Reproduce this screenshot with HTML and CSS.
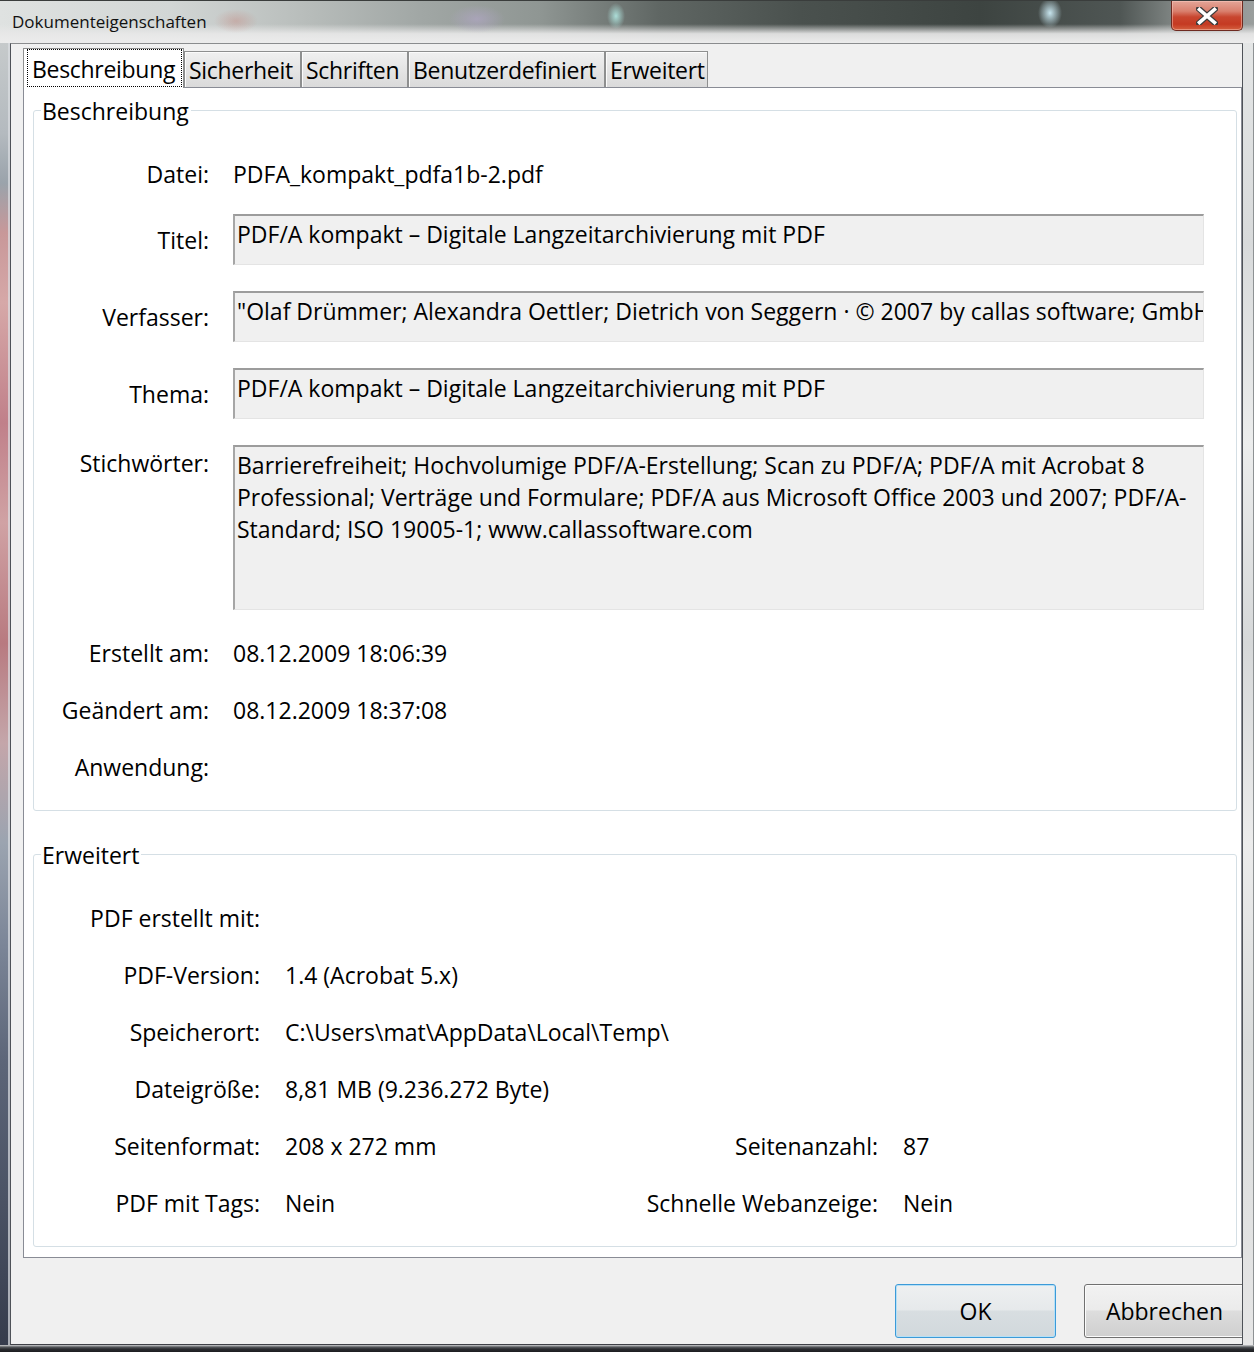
FILE: index.html
```html
<!DOCTYPE html>
<html lang="de">
<head>
<meta charset="utf-8">
<title>Dokumenteigenschaften</title>
<link rel="stylesheet" href="styles.css">
</head>
<body>
<div class="window">
  <div class="titlebar">
    <span class="title">Dokumenteigenschaften</span>
    <div class="close">
      <svg width="22" height="18" viewBox="0 0 22 18">
        <path d="M3 2 L19 16 M19 2 L3 16" stroke="#3c3c3c" stroke-width="6" stroke-linecap="square" fill="none"/>
        <path d="M3.5 2.5 L18.5 15.5 M18.5 2.5 L3.5 15.5" stroke="#ffffff" stroke-width="3.6" stroke-linecap="square" fill="none"/>
      </svg>
    </div>
  </div>
  <div class="frame-row">
    <div class="frame-left"></div>
    <div class="client">
      <div class="tabs">
        <div class="tab tab-active"><span class="tab-focus">Beschreibung</span></div>
        <div class="tab tab-sicherheit">Sicherheit</div>
        <div class="tab tab-schriften">Schriften</div>
        <div class="tab tab-benutzer">Benutzerdefiniert</div>
        <div class="tab tab-erweitert">Erweitert</div>
      </div>
      <div class="panel">
        <fieldset class="group group-desc">
          <legend>Beschreibung</legend>
          <div class="row row-text">
            <div class="label">Datei:</div>
            <div class="value">PDFA_kompakt_pdfa1b-2.pdf</div>
          </div>
          <div class="row gap-13">
            <div class="label">Titel:</div>
            <div class="field">PDF/A kompakt – Digitale Langzeitarchivierung mit PDF</div>
          </div>
          <div class="row gap-26">
            <div class="label">Verfasser:</div>
            <div class="field">"Olaf Drümmer; Alexandra Oettler; Dietrich von Seggern · © 2007 by callas software; GmbH</div>
          </div>
          <div class="row gap-26">
            <div class="label">Thema:</div>
            <div class="field">PDF/A kompakt – Digitale Langzeitarchivierung mit PDF</div>
          </div>
          <div class="row row-tall gap-26">
            <div class="label label-top">Stichwörter:</div>
            <div class="field">Barrierefreiheit; Hochvolumige PDF/A-Erstellung; Scan zu PDF/A; PDF/A mit Acrobat 8<br>Professional; Verträge und Formulare; PDF/A aus Microsoft Office 2003 und 2007; PDF/A-<br>Standard; ISO 19005-1; www.callassoftware.com</div>
          </div>
          <div class="row row-text gap-19">
            <div class="label">Erstellt am:</div>
            <div class="value">08.12.2009 18:06:39</div>
          </div>
          <div class="row row-text gap-6">
            <div class="label">Geändert am:</div>
            <div class="value">08.12.2009 18:37:08</div>
          </div>
          <div class="row row-text gap-6">
            <div class="label">Anwendung:</div>
            <div class="value"></div>
          </div>
        </fieldset>

        <fieldset class="group group-ext">
          <legend>Erweitert</legend>
          <div class="ext-grid">
            <div class="label">PDF erstellt mit:</div>
            <div class="value span-rest"></div>

            <div class="label">PDF-Version:</div>
            <div class="value span-rest">1.4 (Acrobat 5.x)</div>

            <div class="label">Speicherort:</div>
            <div class="value span-rest">C:\Users\mat\AppData\Local\Temp\</div>

            <div class="label">Dateigröße:</div>
            <div class="value span-rest">8,81 MB (9.236.272 Byte)</div>

            <div class="label">Seitenformat:</div>
            <div class="value">208 x 272 mm</div>
            <div class="label">Seitenanzahl:</div>
            <div class="value">87</div>

            <div class="label">PDF mit Tags:</div>
            <div class="value">Nein</div>
            <div class="label">Schnelle Webanzeige:</div>
            <div class="value">Nein</div>
          </div>
        </fieldset>
      </div>
      <div class="buttons">
        <button class="btn btn-default" type="button">OK</button>
        <button class="btn btn-cancel" type="button">Abbrechen</button>
      </div>
    </div>
    <div class="frame-right"></div>
  </div>
  <div class="frame-bottom"></div>
</div>
</body>
</html>
```

FILE: styles.css
```css
* { box-sizing: border-box; }

html, body {
  margin: 0;
  padding: 0;
  background: #1e1e1e;
}

body {
  font-family: "Open Sans", "Noto Sans", sans-serif;
  color: #000;
}

.window {
  width: 1254px;
  height: 1352px;
  display: flex;
  flex-direction: column;
  overflow: hidden;
}

/* ---------- title bar (glass) ---------- */
.titlebar {
  height: 43px;
  flex: none;
  display: flex;
  align-items: flex-start;
  border-top: 1px solid #3a3d3c;
  background:
    radial-gradient(ellipse 12px 15px at 1050px 12px, rgba(205, 236, 246, 0.95), rgba(205, 236, 246, 0) 100%),
    radial-gradient(ellipse 9px 13px at 616px 15px, rgba(178, 232, 226, 0.9), rgba(178, 232, 226, 0) 100%),
    radial-gradient(ellipse 28px 14px at 477px 18px, rgba(176, 166, 196, 0.7), rgba(176, 166, 196, 0) 100%),
    radial-gradient(ellipse 22px 12px at 236px 20px, rgba(196, 120, 110, 0.35), rgba(196, 120, 110, 0) 100%),
    linear-gradient(to bottom, rgba(236, 236, 236, 0) 0, rgba(236, 236, 236, 0) 55%, rgba(232, 232, 232, 0.92) 78%, #ececec 100%),
    linear-gradient(to right, #dfe2e1 0, #d2d6d5 170px, #b9bebc 300px, #a1a7a5 420px, #8f9693 540px, #5f6663 660px, #4a514e 800px, #3d4441 980px, #4f5654 1120px, #7c8280 1170px, #9a9e9d 1254px);
}

.title {
  padding-left: 12px;
  font-size: 17px;
  line-height: 20px;
  margin-top: 11px;
  color: #111;
}

.close {
  margin-left: auto;
  margin-right: 11px;
  width: 72px;
  height: 30px;
  border: 1px solid #6e2a20;
  border-top: none;
  border-radius: 0 0 5px 5px;
  background: linear-gradient(to bottom, #e3a598 0, #d9806e 35%, #c8462f 55%, #c53a22 80%, #d4603f 100%);
  box-shadow: inset 0 0 0 1px rgba(255, 210, 200, 0.45);
  display: flex;
  align-items: center;
  justify-content: center;
}

/* ---------- frame ---------- */
.frame-row {
  height: 1302px;
  flex: none;
  display: flex;
}

.frame-left {
  width: 10px;
  flex: none;
  background: linear-gradient(to bottom, #c6cacb 0, #b4babf 90px, #9aa3ab 140px, #c89899 190px, #d6a8a8 260px, #c0808a 380px, #d0a2a4 480px, #b87a80 600px, #c4a6aa 700px, #9ba4b0 800px, #7c8698 900px, #5c6578 1020px, #4a5264 1160px, #363c4c 1302px);
  box-shadow: inset -2px 0 0 rgba(220, 222, 226, 0.7);
}

.frame-right {
  width: 11px;
  flex: none;
  background: linear-gradient(to bottom, #e4e6e6 0, #d8dadb 200px, #eceded 400px, #d6d8d9 600px, #ececec 800px, #dadcdc 1000px, #e6e6e6 1302px);
  border-right: 1px solid #8e9294;
}

.frame-bottom {
  height: 7px;
  flex: none;
  background: linear-gradient(to bottom, #cfd0d2 0, #55585c 30%, #2a2c30 60%, #1c1d20 100%);
}

/* ---------- client ---------- */
.client {
  width: 1233px;
  flex: none;
  background: #f0f0f0;
  border-top: 1px solid #8a8c8e;
  border-left: 1px solid #4e5258;
  border-right: 1px solid #4e5258;
  border-bottom: 1px solid #3e4046;
  padding: 4px 0 0 12px;
  display: flex;
  flex-direction: column;
  overflow: hidden;
}

/* ---------- tabs ---------- */
.tabs {
  height: 39px;
  display: flex;
  align-items: flex-end;
  flex: none;
}

.tab {
  height: 36px;
  border: 1px solid #8e8f8f;
  border-bottom: none;
  background: linear-gradient(to bottom, #f0f0f0 0, #e6e6e6 45%, #dadada 100%);
  box-shadow: inset 1px 1px 0 #fbfbfb;
  font-size: 23px;
  line-height: 32px;
  letter-spacing: -0.3px;
  padding: 2px 0 0 4px;
  white-space: nowrap;
  overflow: hidden;
}

.tab-active {
  position: relative;
  z-index: 1;
  width: 161px;
  height: 40px;
  margin-bottom: -1px;
  background: #fff;
  box-shadow: none;
  padding: 0 1px 0 3px;
}

.tab-focus {
  display: block;
  height: 38px;
  border: 1px dotted #000;
  padding: 3px 0 0 4px;
  line-height: 32px;
}

.tab-sicherheit { width: 117px; }
.tab-schriften { width: 107px; }
.tab-benutzer { width: 197px; }
.tab-erweitert { width: 103px; }

/* ---------- panel ---------- */
.panel {
  flex: none;
  width: 1219px;
  height: 1171px;
  background: #fff;
  border: 1px solid #898c95;
  padding: 6px 4px 0 9px;
}

.group {
  margin: 0;
  padding: 0;
  min-inline-size: 0;
  border: 1px solid #d5dfe5;
  border-radius: 3px;
  width: 1204px;
}

.group legend {
  font-size: 23px;
  line-height: 32px;
  padding: 0 2px 0 1px;
  margin-left: 7px;
  position: relative;
  top: 1px;
}

.group-desc {
  padding-top: 24px;
  padding-bottom: 16px;
}

.group-ext {
  margin-top: 27px;
  padding-top: 22px;
  padding-bottom: 18px;
}

.row {
  height: 51px;
  display: grid;
  grid-template-columns: 175px 971px;
  column-gap: 24px;
  align-items: center;
}

.row-text { padding-bottom: 3px; }

.row-tall { height: 165px; }

.gap-6 { margin-top: 6px; }
.gap-13 { margin-top: 13px; }
.gap-19 { margin-top: 19px; }
.gap-26 { margin-top: 26px; }

.label,
.value,
.field {
  font-size: 23px;
  line-height: 32px;
  white-space: nowrap;
}

.label { text-align: right; }

.label-top {
  align-self: start;
  padding-top: 2px;
}

.field {
  align-self: stretch;
  background: #f0f0f0;
  border-top: 2px solid #9c9c9c;
  border-left: 2px solid #a6a6a6;
  border-right: 1px solid #e4e4e4;
  border-bottom: 1px solid #e4e4e4;
  padding: 2px 0 0 2px;
  overflow: hidden;
}

.ext-grid {
  display: grid;
  grid-template-columns: 226px 290px 278px 1fr;
  grid-auto-rows: 51px;
  column-gap: 25px;
  row-gap: 6px;
  align-items: center;
}

.span-rest { grid-column: 2 / -1; }

/* ---------- buttons ---------- */
.buttons {
  flex: 1;
  display: flex;
  justify-content: flex-end;
  align-items: flex-start;
  padding-top: 26px;
  gap: 28px;
  margin-right: -3px;
}

.btn {
  width: 161px;
  height: 54px;
  border: 1px solid #707070;
  border-radius: 3px;
  background: linear-gradient(to bottom, #f2f2f2 0, #ebebeb 48%, #dddddd 50%, #cfcfcf 100%);
  box-shadow: inset 0 0 0 1px #fbfbfb;
  font-family: "Open Sans", "Noto Sans", sans-serif;
  font-size: 23px;
  color: #000;
  padding: 0;
}

.btn-default {
  border-color: #3c9ad8;
  background: linear-gradient(to bottom, #eef0f1 0, #e6e9eb 48%, #d8dee1 50%, #d1d8dc 100%);
  box-shadow: inset 0 0 0 1px #b6e0f6;
}
```
